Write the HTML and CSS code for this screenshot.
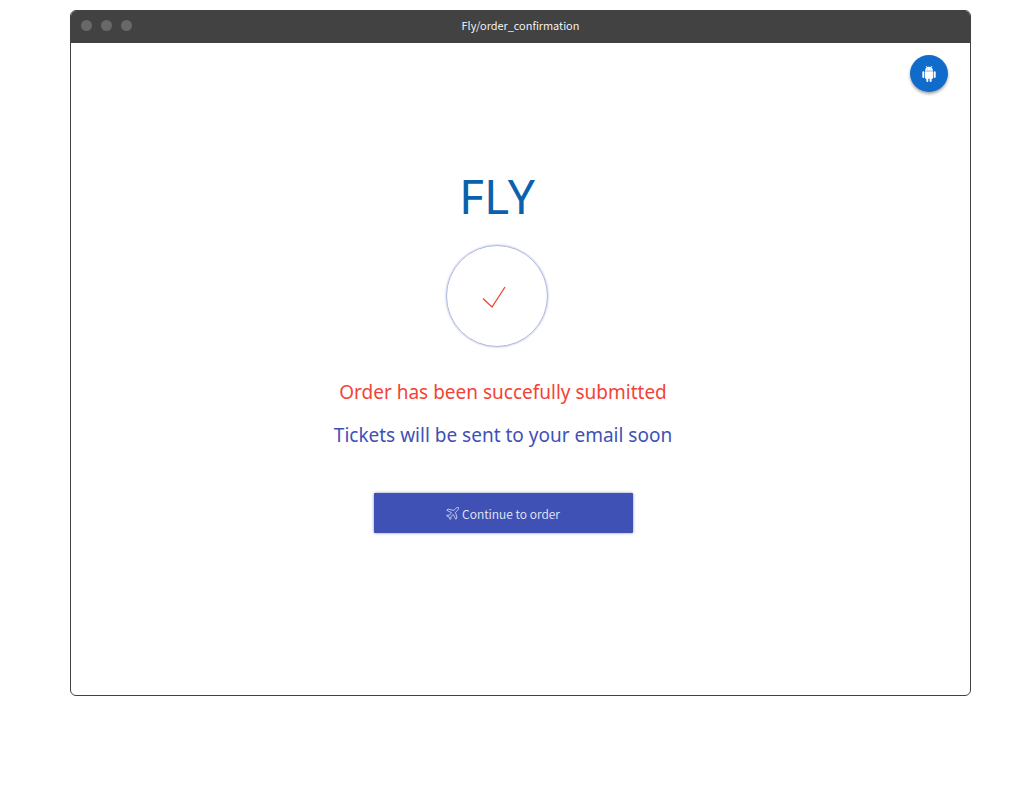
FILE: index.html
```html
<!DOCTYPE html>
<html lang="en">
<head>
<meta charset="utf-8">
<meta name="viewport" content="width=device-width, initial-scale=1">
<title>Fly/order_confirmation</title>
<link rel="stylesheet" href="styles.css">
</head>
<body>
<div class="window">
  <header class="titlebar">
    <div class="dots"><span class="dot"></span><span class="dot"></span><span class="dot"></span></div>
    <span class="title">Fly/order_confirmation</span>
  </header>
  <main class="screen">
    <div class="toolbar">
      <button class="fab" type="button" aria-label="Android app">
        <svg width="16" height="16" viewBox="0 0 24 24" fill="currentColor" aria-hidden="true"><path d="M6 18c0 .55.45 1 1 1h1v3.500a1.500 1.500 0 0 0 3 0V19h2v3.500a1.500 1.500 0 0 0 3 0V19h1c.55 0 1-.45 1-1V8H6v10zM3.500 8A1.500 1.500 0 0 0 2 9.500v7a1.500 1.500 0 0 0 3 0v-7A1.500 1.500 0 0 0 3.500 8zm17 0A1.500 1.500 0 0 0 19 9.500v7a1.500 1.500 0 0 0 3 0v-7A1.500 1.500 0 0 0 20.500 8zm-4.970-5.840 1.300-1.300c.2-.2.2-.51 0-.71-.2-.2-.51-.2-.71 0l-1.480 1.480A5.840 5.840 0 0 0 12 1c-.96 0-1.860.230-2.660.630L7.850.15c-.2-.2-.51-.2-.71 0-.2.2-.2.51 0 .71l1.310 1.310A5.983 5.983 0 0 0 6 7h12c0-1.990-.970-3.750-2.470-4.840zM10 5H9V4h1v1zm5 0h-1V4h1v1z"/></svg>
      </button>
    </div>
    <section class="brand">
      <h1 class="logo">FLY</h1>
      <div class="badge">
        <svg width="38" height="32" viewBox="0 0 38 32" fill="none" stroke="#f44336" stroke-width="1.300" aria-hidden="true"><path d="M5 18.500 14 27 27 7"/></svg>
      </div>
    </section>
    <section class="message">
      <p class="line done">Order has been succefully submitted</p>
      <p class="line">Tickets will be sent to your email soon</p>
      <button class="continue" type="button">
        <svg width="13" height="13" viewBox="0 0 26 26" fill="none" stroke="currentColor" stroke-width="1.500" stroke-linejoin="round" aria-hidden="true"><path d="M25 1c-2-.6-4 .2-5.500 1.700L15.500 7 4 4 1.500 6.500 11 11.500 6.500 16.500 2.500 16 1 17.500 6 20 8.500 25 10 23.500 9.500 19.500 14.500 15 19.500 24.500 22 22 19 10.500 23.300 6.500C24.800 5 25.600 3 25 1z"/></svg>
        <span>Continue to order</span>
      </button>
    </section>
  </main>
</div>
</body>
</html>
```
FILE: styles.css
```css
* {
  box-sizing: border-box;
}

body {
  margin: 0;
  padding: 10px 49px 40px 70px;
  background: #fff;
  font-family: "Noto Sans", "Open Sans", sans-serif;
}

.window {
  border: 1px solid #424242;
  border-radius: 6px;
  overflow: hidden;
}

.titlebar {
  display: grid;
  grid-template-columns: 1fr auto 1fr;
  padding: 0 10px;
  height: 32px;
  background: #424242;
}

.dots {
  display: flex;
  gap: 9px;
  padding-top: 9px;
}

.dot {
  width: 11px;
  height: 11px;
  border-radius: 50%;
  background: #686868;
}

.title {
  color: #fff;
  font-family: "Noto Sans CJK SC", "Noto Sans", sans-serif;
  font-size: 11px;
  font-weight: 350;
  line-height: 28px;
}

.screen {
  padding: 12px 22px 162px;
}

.toolbar {
  display: flex;
  justify-content: flex-end;
}

.fab {
  display: flex;
  align-items: center;
  justify-content: center;
  width: 38px;
  height: 37px;
  padding: 0;
  border: 0;
  border-radius: 50%;
  background: #116bcb;
  color: #fff;
  box-shadow: 0 2px 3px rgba(0, 0, 0, 0.35);
}

.brand {
  display: flex;
  flex-direction: column;
  align-items: center;
  gap: 17px;
  padding: 72px 47px 0 0;
}

.logo {
  margin: 0;
  color: #0b61ab;
  font-size: 48px;
  font-weight: 400;
  line-height: 64px;
}

.badge {
  display: flex;
  align-items: center;
  justify-content: center;
  width: 102px;
  height: 102px;
  border: 1px solid #b0b5de;
  border-radius: 50%;
  box-shadow: 0 0 2px #9fa8da;
}

.message {
  display: flex;
  flex-direction: column;
  align-items: center;
  padding: 24px 35px 0 0;
}

.line {
  margin: 0;
  color: #3f51b5;
  font-size: 19px;
  font-weight: 400;
  line-height: 43px;
}

.done {
  color: #f44336;
}

.continue {
  display: flex;
  align-items: center;
  justify-content: center;
  gap: 3px;
  width: 100%;
  max-width: 259px;
  height: 40px;
  margin-top: 36px;
  padding: 0;
  border: 0;
  border-radius: 1px;
  background: #3f51b5;
  color: #e8eaf6;
  font-family: "Noto Sans CJK SC", "Noto Sans", sans-serif;
  font-size: 12px;
  font-weight: 350;
  box-shadow: 0 0 3px #7986cb;
}
```
